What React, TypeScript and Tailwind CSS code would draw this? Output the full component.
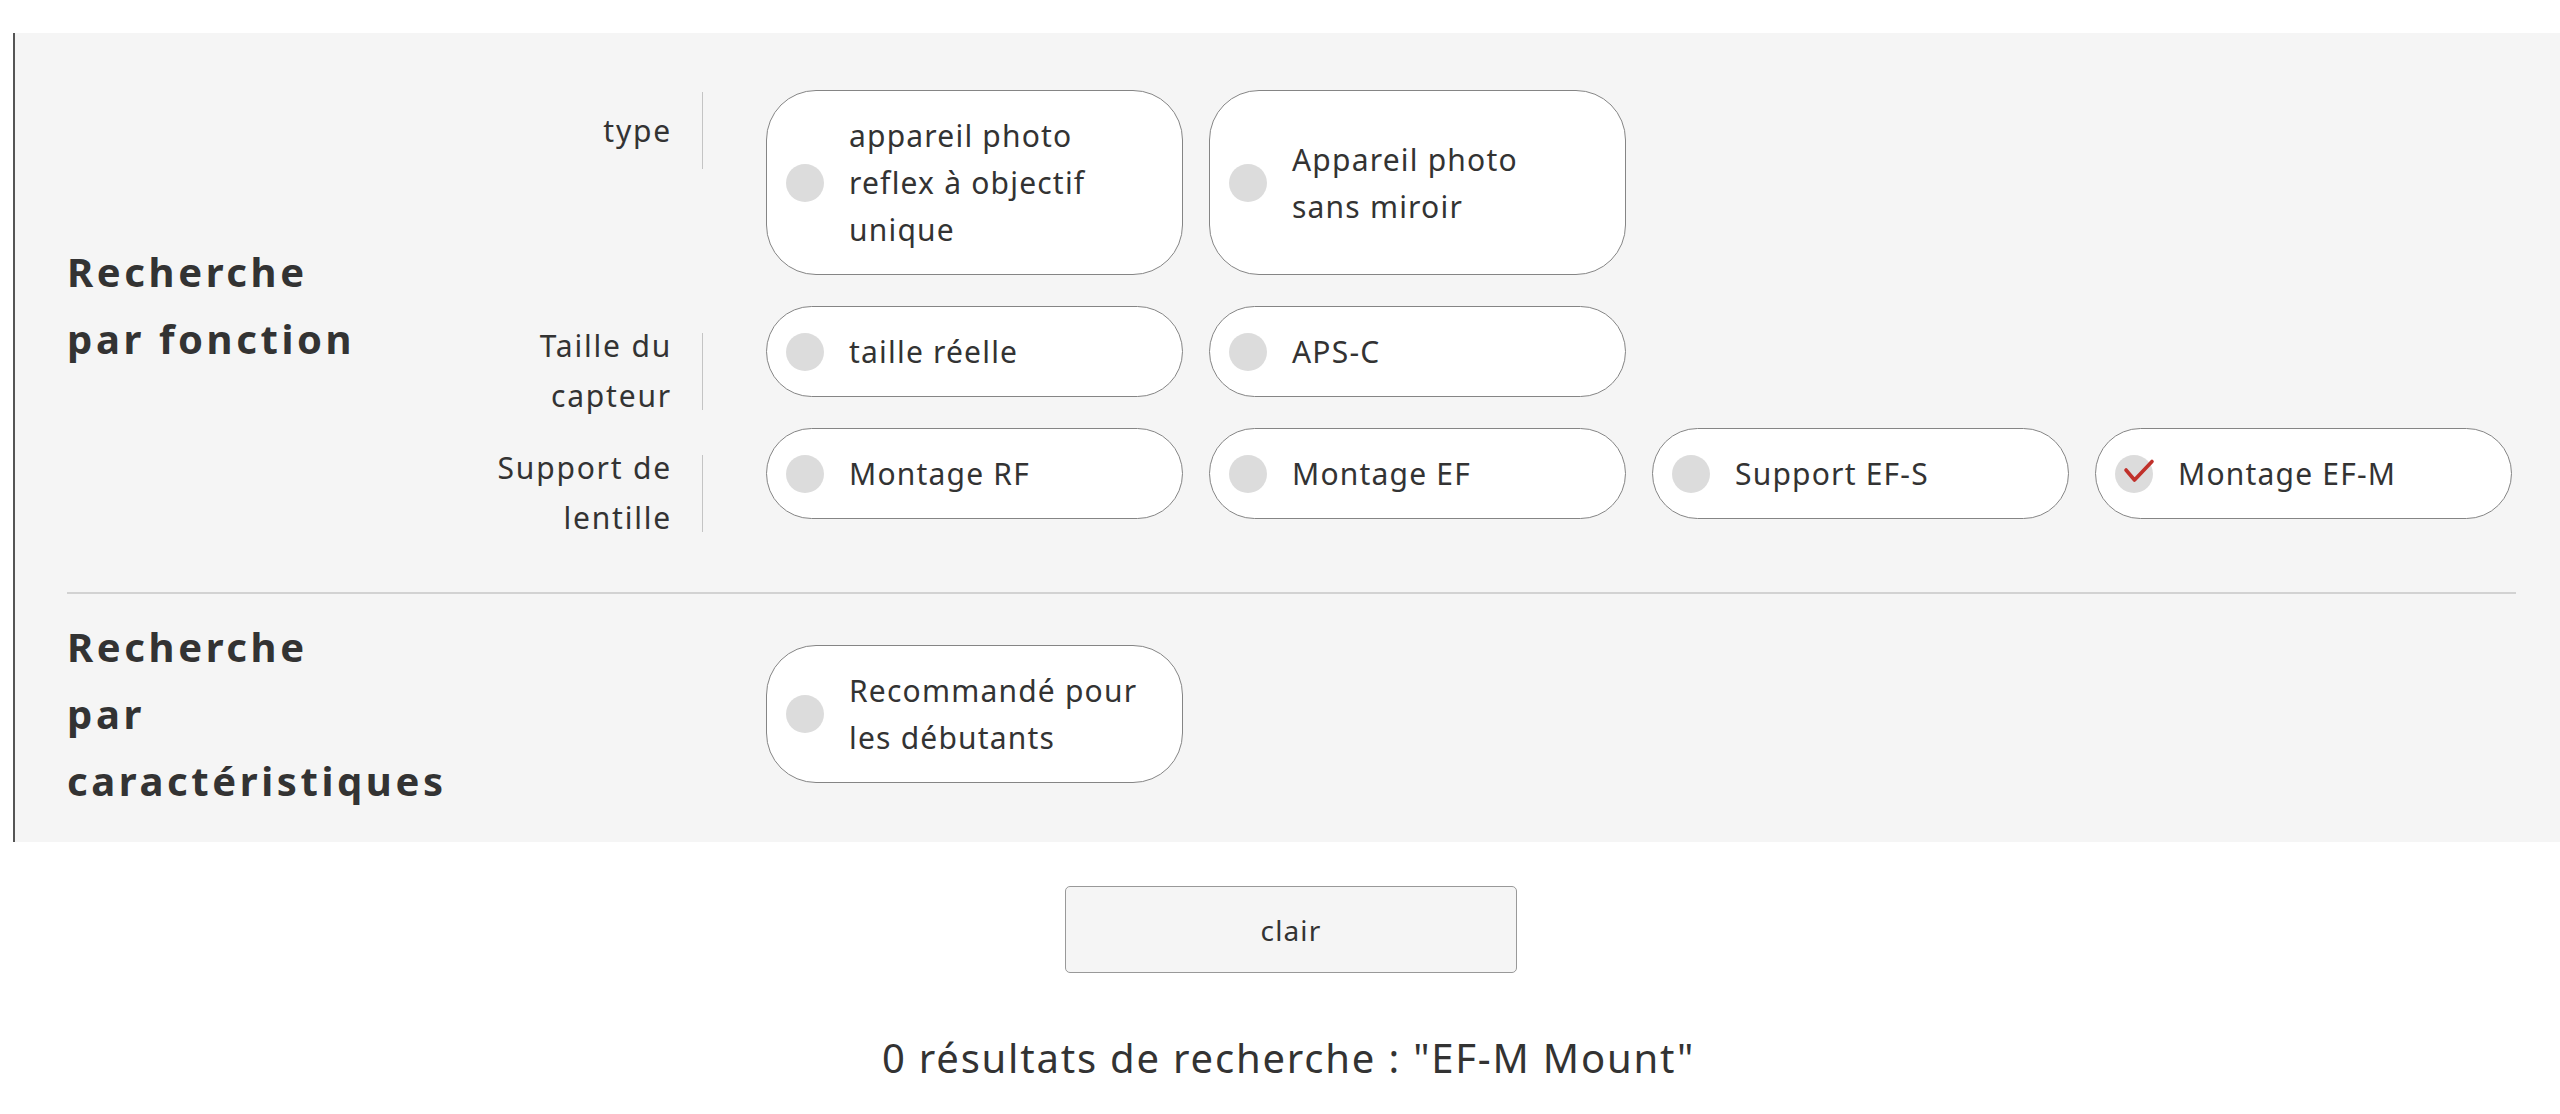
import React from "react";

type Option = { lines: string[]; checked?: boolean };
type Row = { label: string[]; options: Option[] };

const rows: Row[] = [
	{
		label: ["type"],
		options: [
			{ lines: ["appareil photo", "reflex à objectif", "unique"] },
			{ lines: ["Appareil photo", "sans miroir"] },
		],
	},
	{
		label: ["Taille du", "capteur"],
		options: [{ lines: ["taille réelle"] }, { lines: ["APS-C"] }],
	},
	{
		label: ["Support de", "lentille"],
		options: [
			{ lines: ["Montage RF"] },
			{ lines: ["Montage EF"] },
			{ lines: ["Support EF-S"] },
			{ lines: ["Montage EF-M"], checked: true },
		],
	},
];

function Pill({ option }: { option: Option }) {
	return (
		<label className="flex w-[417px] shrink-0 cursor-pointer items-center rounded-[50px] border-[1.5px] border-[#858585] bg-white py-[21px] pl-[19px] pr-[24px]">
			{/* Radio dot */}
			<span className="relative h-[38px] w-[38px] shrink-0 rounded-full bg-[#dcdcdc]">
				{option.checked && (
					<svg
						className="absolute left-0 top-0 overflow-visible"
						width="38"
						height="38"
						viewBox="0 0 38 38"
						fill="none"
					>
						<path
							d="M11 15 L19.5 25 L37 6.5"
							stroke="#c0312b"
							strokeWidth="3.6"
							strokeLinecap="round"
							strokeLinejoin="round"
						/>
					</svg>
				)}
			</span>
			<span className="ml-[25px] text-[30px] leading-[47px] tracking-[0.04em] text-[#333]">
				{option.lines.map((l, i) => (
					<span key={i} className="block whitespace-nowrap">
						{l}
					</span>
				))}
			</span>
		</label>
	);
}

function Heading({ lines }: { lines: string[] }) {
	return (
		<div className="w-[400px] shrink-0 text-[40px] font-bold leading-[67px] tracking-[0.09em] text-[#333]">
			{lines.map((l, i) => (
				<div key={i} className="whitespace-nowrap">
					{l}
				</div>
			))}
		</div>
	);
}

export default function App() {
	return (
		<div
			className="min-h-screen bg-white pt-[33px] pb-[40px]"
			style={{ fontFamily: '"Noto Sans", "Liberation Sans", sans-serif' }}
		>
			{/* Filter panel */}
			<div className="ml-[13px] border-l-[2px] border-[#555] bg-[#f5f5f5] pl-[52px] pr-[44px]">
				{/* Search by function */}
				<div className="flex items-center pt-[57px] pb-[73px]">
					<Heading lines={["Recherche", "par fonction"]} />
					<div className="flex flex-col gap-[31px]">
						{rows.map((row, i) => (
							<div key={i} className="flex">
								{/* Label + separator (overflows the row, pills set its height) */}
								<div className="h-0 w-[299px] shrink-0 overflow-visible pr-[63px]">
									<div className="flex items-center justify-end pt-[15px]">
										<div className="text-right text-[30px] leading-[50px] tracking-[0.06em] text-[#333]">
											{row.label.map((l, j) => (
												<div key={j} className="whitespace-nowrap">
													{l}
												</div>
											))}
										</div>
										<div className="-my-[13px] ml-[30px] h-[77px] w-px shrink-0 bg-[#c4c4c4]" />
									</div>
								</div>
								<div className="flex gap-[26px]">
									{row.options.map((o, j) => (
										<Pill key={j} option={o} />
									))}
								</div>
							</div>
						))}
					</div>
				</div>

				<div className="h-[2px] bg-[#d2d2d2]" />

				{/* Search by characteristics */}
				<div className="flex items-center pt-[19px] pb-[28px]">
					<Heading lines={["Recherche", "par", "caractéristiques"]} />
					<div className="pl-[299px]">
						<Pill option={{ lines: ["Recommandé pour", "les débutants"] }} />
					</div>
				</div>
			</div>

			{/* Clear button */}
			<div className="mt-[44px] flex justify-center pl-[22px]">
				<button className="h-[87px] w-[452px] rounded-[5px] border border-[#999] bg-[#f5f5f5] text-[28px] tracking-[0.04em] text-[#333]">
					clair
				</button>
			</div>

			{/* Result count */}
			<p className="mt-[55px] pl-[17px] text-center text-[40px] leading-[60px] tracking-[0.045em] text-[#333]">
				0 résultats de recherche : "EF-M Mount"
			</p>
		</div>
	);
}
